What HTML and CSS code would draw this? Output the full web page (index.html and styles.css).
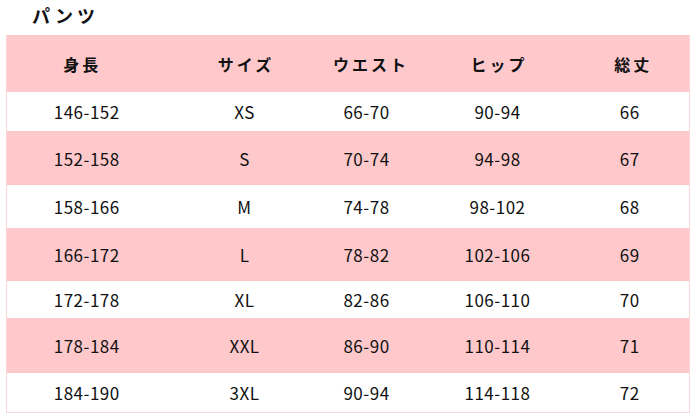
FILE: index.html
```html
<!DOCTYPE html>
<html lang="ja">
<head>
<meta charset="utf-8">
<link rel="stylesheet" href="styles.css">
</head>
<body>
<div class="title">パンツ</div>
<table class="size-table">
  <colgroup>
    <col class="c1"><col class="c2"><col class="c3"><col class="c4"><col class="c5">
  </colgroup>
  <thead>
    <tr class="head"><th class="h1">身長</th><th>サイズ</th><th>ウエスト</th><th>ヒップ</th><th>総丈</th></tr>
  </thead>
  <tbody>
    <tr class="w r1"><td>146-152</td><td>XS</td><td>66-70</td><td>90-94</td><td>66</td></tr>
    <tr class="p r2"><td>152-158</td><td>S</td><td>70-74</td><td>94-98</td><td>67</td></tr>
    <tr class="w r3"><td>158-166</td><td>M</td><td>74-78</td><td>98-102</td><td>68</td></tr>
    <tr class="p r4"><td>166-172</td><td>L</td><td>78-82</td><td>102-106</td><td>69</td></tr>
    <tr class="w r5"><td>172-178</td><td>XL</td><td>82-86</td><td>106-110</td><td>70</td></tr>
    <tr class="p r6"><td>178-184</td><td>XXL</td><td>86-90</td><td>110-114</td><td>71</td></tr>
    <tr class="w r7"><td>184-190</td><td>3XL</td><td>90-94</td><td>114-118</td><td>72</td></tr>
  </tbody>
</table>
</body>
</html>
```
FILE: styles.css
```css
html, body {
  margin: 0;
  padding: 0;
  background: #ffffff;
  width: 700px;
  height: 420px;
  overflow: hidden;
  font-family: "Noto Sans CJK JP", "Noto Sans", sans-serif;
  color: #111111;
}

.title {
  height: 35px;
  box-sizing: border-box;
  padding-left: 32px;
  padding-top: 4px;
  font-size: 18px;
  line-height: 22px;
  font-weight: 700;
  letter-spacing: 4px;
}

.size-table {
  margin-left: 6px;
  width: 683px;
  table-layout: fixed;
  border-collapse: collapse;
  border: 1px solid #fcd6d9;
  border-top: none;
}

.c1 { width: 160px; }
.c2 { width: 156px; }
.c3 { width: 94px; }
.c4 { width: 162px; }
.c5 { width: 111px; }

th, td {
  padding: 0;
  text-align: center;
  vertical-align: middle;
}

th {
  font-size: 16px;
  font-weight: 700;
  letter-spacing: 3px;
  text-indent: 3px;
}

th.h1 { padding-right: 12px; }

td {
  font-size: 17px;
  font-weight: 400;
  letter-spacing: 0.5px;
}

td:nth-child(3) { padding-right: 6px; }
td:nth-child(5) { padding-right: 8px; }
th:nth-child(5) { padding-right: 4px; }

.head { height: 57px; background: #ffc9cc; }
.p { background: #ffc9cc; }
.w { background: #ffffff; }

.r1 { height: 39px; }
.r2 { height: 54px; }
.r3 { height: 43px; }
.r4 { height: 53px; }
.r5 { height: 37px; }
.r6 { height: 55px; }
.r7 { height: 39px; }
```
